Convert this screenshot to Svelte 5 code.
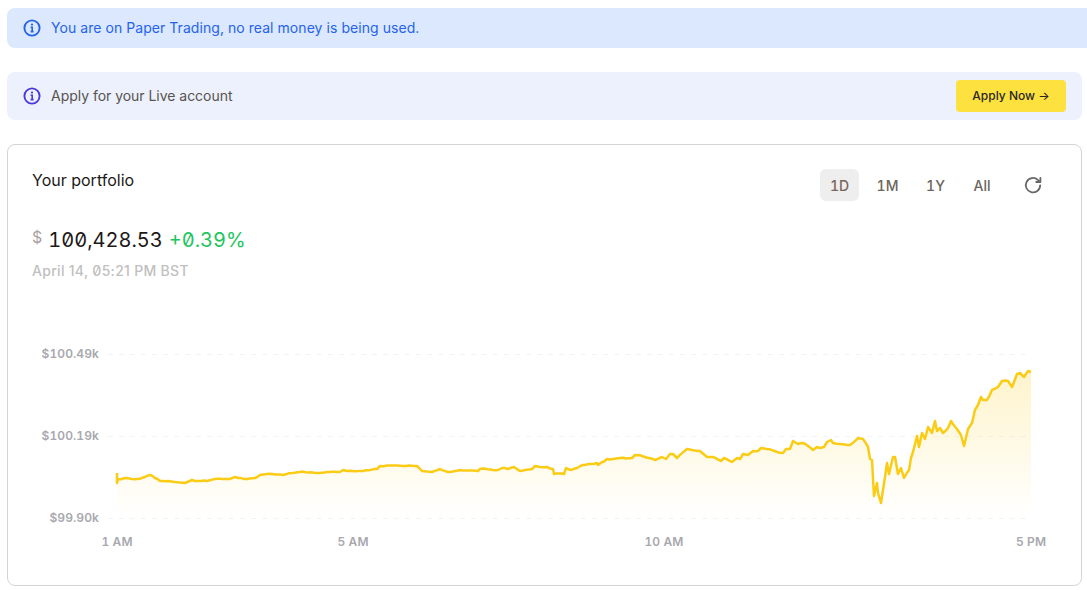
<script>
  const pts = [[117,473],[117,483],[118,479],[127,478],[137,479],[145,477],[150,475],[155,478],[160,481],[168,481],[175,482],[185,483],[192,480],[198,481],[207,481],[215,479],[230,479],[235,477],[247,479],[255,478],[260,475],[267,474],[283,475],[292,473],[300,472],[317,473],[340,472],[343,470],[347,471],[363,471],[377,469],[380,466],[387,465.5],[403,466],[417,466],[422,471],[432,472],[440,469],[448,472],[460,470],[478,471],[480,469],[498,470],[502,468],[508,469],[514,467],[520,471],[532,469],[535,466],[540,467],[547,467],[553,469],[554,474],[564,474],[566,468],[571,470],[583,465],[597,463],[598,465],[607,459],[613,459],[620,458],[632,458],[635,455],[640,455],[645,457],[655,460],[662,457],[666,459],[670,454],[673,454],[677,458],[687,449],[692,450],[700,451],[707,457],[713,457],[721,461],[724,458],[732,462],[737,458],[740,459],[743,454],[748,455],[753,451],[758,451],[761,448],[767,449],[777,452],[783,453],[786,449],[790,449],[793,441],[798,444],[803,443],[813,450],[817,447],[820,448],[824,447],[827,442],[831,440],[833,443],[840,444],[850,445],[858,438],[863,439],[868,447],[870,459],[872,460],[874,496],[877,483],[878,493],[881,503],[885,477],[887,463],[889,474],[893,457],[895,457],[898,474],[901,468],[904,478],[909,470],[911,458],[913,452],[917,436],[919,447],[922,433],[925,439],[928,427],[932,433],[935,421],[937,431],[940,428],[943,433],[948,428],[951,421],[957,429],[961,435],[964,446],[968,429],[972,423],[975,410],[978,405],[981,397],[983,400],[987,400],[992,390],[998,387],[1002,381],[1008,381],[1012,387],[1017,374],[1020,373],[1024,377],[1028,371],[1031,372]];
  const ox = 8, oy = 330;
  // Subdivide long segments with a small repeatable wobble so the trace reads as tick data.
  const dense = [];
  pts.forEach(([x, y], i) => {
    const next = pts[i + 1];
    dense.push([x, y]);
    if (!next) return;
    const steps = Math.floor((next[0] - x) / 2.5);
    for (let s = 1; s < steps; s++) {
      const t = s / steps;
      const px = x + (next[0] - x) * t;
      const wobble = (Math.sin(px * 2.3) + Math.sin(px * 5.1)) * 0.3;
      dense.push([px, y + (next[1] - y) * t + wobble]);
    }
  });
  const line = dense.map(([x, y]) => `${(x - ox).toFixed(1)},${(y - oy).toFixed(1)}`).join(' ');
  const area = `M${117 - ox},${518 - oy} L${line.replaceAll(' ', ' L')} L${1031 - ox},${518 - oy} Z`;
  const grid = [
    { y: 354, label: '$100.49k' },
    { y: 436, label: '$100.19k' },
    { y: 518, label: '$99.90k' }
  ];
  const ticks = [
    { x: 117, label: '1 AM' },
    { x: 353, label: '5 AM' },
    { x: 664, label: '10 AM' },
    { x: 1031, label: '5 PM' }
  ];
  const ranges = ['1D', '1M', '1Y', 'All'];
</script>

<main class="page">
  <div class="notice paper">
    <svg class="info" viewBox="0 0 18 18" aria-hidden="true">
      <circle cx="9" cy="9" r="7.6" fill="none" stroke="currentColor" stroke-width="1.9" />
      <path d="M7.6 8.2H9.2V12.4M7.6 12.6H10.6" fill="none" stroke="currentColor" stroke-width="1.6" />
      <circle cx="9" cy="5.6" r="1.1" fill="currentColor" />
    </svg>
    <span>You are on Paper Trading, no real money is being used.</span>
  </div>

  <div class="notice live">
    <svg class="info" viewBox="0 0 18 18" aria-hidden="true">
      <circle cx="9" cy="9" r="7.6" fill="none" stroke="currentColor" stroke-width="1.9" />
      <path d="M7.6 8.2H9.2V12.4M7.6 12.6H10.6" fill="none" stroke="currentColor" stroke-width="1.6" />
      <circle cx="9" cy="5.6" r="1.1" fill="currentColor" />
    </svg>
    <span class="grow">Apply for your Live account</span>
    <button class="apply">Apply Now →</button>
  </div>

  <section class="card">
    <header class="head">
      <h2>Your portfolio</h2>
      <div class="ranges">
        {#each ranges as r, i}
          <button class="range" class:active={i === 0}>{r}</button>
        {/each}
        <button class="refresh" aria-label="Refresh">
          <svg viewBox="0 0 20 20" width="20" height="20" aria-hidden="true">
            <path d="M17.2 10.4a7.2 7.2 0 1 1-2.4-5.6L17 7" fill="none" stroke="currentColor" stroke-width="1.8" stroke-linecap="round" />
            <path d="M17.4 2.8V7H13.2" fill="none" stroke="currentColor" stroke-width="1.8" stroke-linecap="round" stroke-linejoin="round" />
          </svg>
        </button>
      </div>
    </header>

    <div class="value">
      <span class="cur">$</span>
      <span class="amount">100,428.53</span>
      <span class="change">+0.39%</span>
    </div>
    <div class="date">April 14, 05:21 PM BST</div>

    <svg class="chart" width="1060" height="235" viewBox="0 0 1060 235" role="img" aria-label="Portfolio value chart">
      <defs>
        <linearGradient id="fill" x1="0" y1="0" x2="0" y2="1">
          <stop offset="0" stop-color="#facc15" stop-opacity="0.22" />
          <stop offset="1" stop-color="#facc15" stop-opacity="0" />
        </linearGradient>
      </defs>
      {#each grid as g}
        <line x1={108 - ox} x2={1031 - ox} y1={g.y - oy + 0.5} y2={g.y - oy + 0.5} class="gridline" />
        <text x={99 - ox} y={g.y - oy + 4} class="axis" text-anchor="end">{g.label}</text>
      {/each}
      <path d={area} fill="url(#fill)" />
      <polyline points={line} fill="none" stroke="#facc15" stroke-width="2.5" stroke-linejoin="round" />
      {#each ticks as t}
        <text x={t.x - ox} y={546 - oy} class="axis" text-anchor="middle">{t.label}</text>
      {/each}
    </svg>
  </section>
</main>

<style>
  :global(body) {
    margin: 0;
    background: #fff;
    font-family: Inter, "Liberation Sans", sans-serif;
  }
  .page {
    box-sizing: border-box;
    width: 1087px;
    height: 590px;
    padding: 8px 5px 0 7px;
    overflow: hidden;
  }
  .notice {
    display: flex;
    align-items: center;
    gap: 10px;
    padding: 0 16px;
    font-size: 14px;
    border-radius: 8px;
  }
  .paper {
    height: 40px;
    margin-right: -5px;
    margin-bottom: 24px;
    background: #dbe8fe;
    color: #2563eb;
    border-radius: 8px 0 0 8px;
  }
  .paper span {
    padding-bottom: 1px;
    letter-spacing: 0.055px;
  }
  .live {
    height: 48px;
    padding-right: 16px;
    margin-bottom: 24px;
    background: #edf1fd;
    color: #57534e;
    letter-spacing: -0.03px;
  }
  .live .grow {
    padding-bottom: 1px;
  }
  .live .info {
    color: #4f39d6;
  }
  .info {
    width: 18px;
    height: 18px;
    flex: none;
  }
  .grow {
    flex: 1;
  }
  .apply {
    width: 110px;
    height: 32px;
    border: 0;
    padding: 0 0 1px;
    border-radius: 4px;
    background: #fde23f;
    color: #292524;
    font: 500 12px Inter, sans-serif;
  }
  .card {
    box-sizing: border-box;
    height: 442px;
    border: 1px solid #d4d4d4;
    border-radius: 8px;
    padding: 24px 0 0 24px;
  }
  .head {
    display: flex;
    justify-content: space-between;
    align-items: flex-start;
  }
  h2 {
    margin: 0;
    font-size: 16px;
    line-height: 22px;
    font-weight: 400;
    color: #1c1917;
  }
  .ranges {
    display: flex;
    align-items: center;
    margin-right: 38px;
  }
  .range {
    box-sizing: border-box;
    width: 39px;
    height: 32px;
    margin-right: 9px;
    border: 0;
    padding: 0;
    border-radius: 6px;
    background: none;
    color: #6b6560;
    font: 500 14px Inter, sans-serif;
    font-feature-settings: "tnum";
  }
  .range:nth-child(4) {
    width: 36px;
  }
  .range.active {
    background: #eeeeee;
    color: #78655c;
  }
  .refresh {
    display: flex;
    margin-left: 14px;
    padding: 0;
    border: 0;
    background: none;
    color: #686868;
  }
  .value {
    display: flex;
    align-items: flex-start;
    margin-top: 25px;
    height: 32px;
    font-family: Inter, sans-serif;
    font-feature-settings: "tnum", "zero";
    font-size: 20px;
    line-height: 28px;
  }
  .cur {
    font-size: 16px;
    line-height: 22px;
    color: #a8a29e;
    margin-right: 6px;
  }
  .amount {
    color: #1c1917;
    margin-right: 6px;
  }
  .change {
    color: #22c55e;
  }
  .date {
    margin-top: 3px;
    font-size: 14px;
    line-height: 20px;
    font-weight: 500;
    letter-spacing: 0.3px;
    font-feature-settings: "zero";
    color: #c0c0c0;
  }
  .chart {
    display: block;
    margin-top: 49px;
    margin-left: -24px;
  }
  .gridline {
    stroke: #f3f3f3;
    stroke-width: 1;
    stroke-dasharray: 5 6;
  }
  .axis {
    font-family: Inter, sans-serif;
    font-size: 12px;
    font-weight: 600;
    font-feature-settings: "tnum";
    letter-spacing: 0.1px;
    fill: #a8a8ae;
  }
</style>
